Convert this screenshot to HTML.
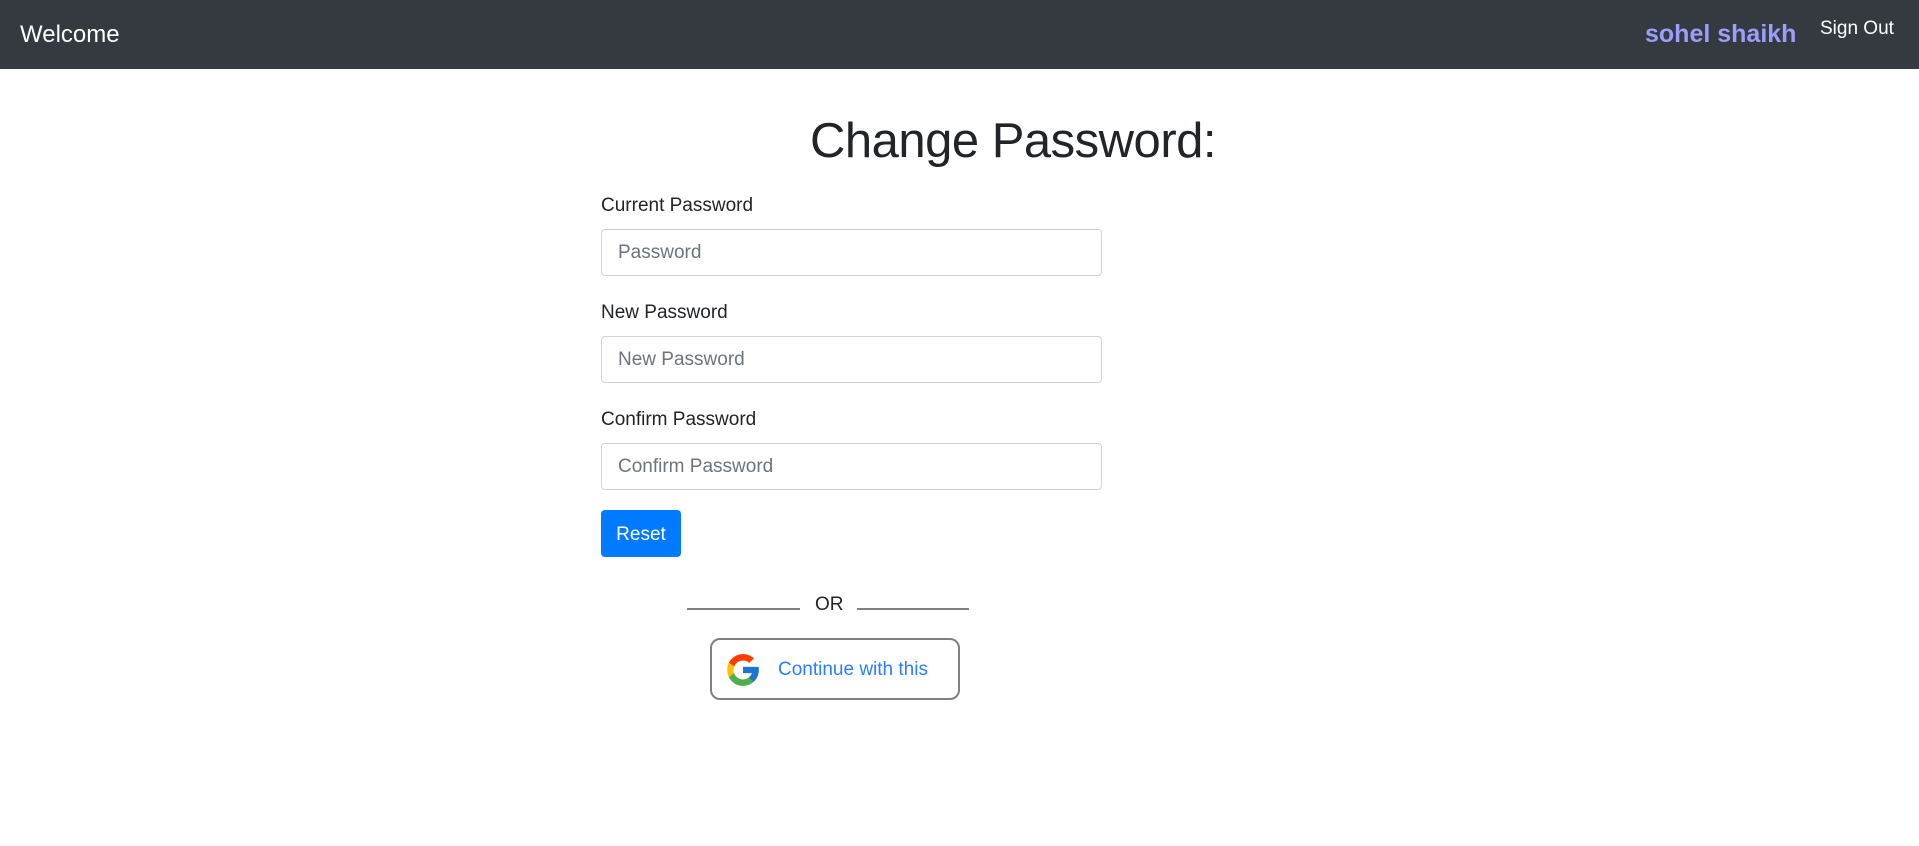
<!DOCTYPE html>
<html><head><style>
body{margin:0;width:1919px;height:846px;background:#fff;font-family:"Liberation Sans",sans-serif;color:#212529;position:relative;overflow:hidden}
.nav{position:absolute;left:0;top:0;width:1919px;height:69px;background:#343a40}
.abs{position:absolute;white-space:nowrap}
.lbl{font-size:19px;left:601px}
.inp{position:absolute;left:601px;width:501px;height:47px;border:1px solid #ced4da;border-radius:4px;box-sizing:border-box;font-size:19px;color:#6c757d;padding-left:16px;line-height:45px}
</style></head><body>
<div class="nav"></div>
<div class="abs" style="left:20px;top:21px;font-size:24px;color:#fff">Welcome</div>
<div class="abs" style="left:1645px;top:20px;font-size:25px;font-weight:bold;color:#9d9dfb">sohel shaikh</div>
<div class="abs" style="left:1820px;top:18px;font-size:19px;color:#fff">Sign Out</div>
<div class="abs" style="left:0;width:2026px;text-align:center;top:113px;font-size:49px;letter-spacing:-0.5px">Change Password:</div>
<div class="abs lbl" style="top:195px">Current Password</div>
<div class="inp" style="top:229px">Password</div>
<div class="abs lbl" style="top:302px">New Password</div>
<div class="inp" style="top:336px">New Password</div>
<div class="abs lbl" style="top:409px">Confirm Password</div>
<div class="inp" style="top:443px">Confirm Password</div>
<div class="abs" style="left:601px;top:510px;width:80px;height:47px;background:#007bff;border-radius:4px;color:#fff;font-size:19px;text-align:center;line-height:49px">Reset</div>
<div class="abs" style="left:687px;top:608px;width:113px;height:2px;background:#808080"></div>
<div class="abs" style="left:815px;top:594px;font-size:19px">OR</div>
<div class="abs" style="left:857px;top:608px;width:112px;height:2px;background:#808080"></div>
<div class="abs" style="left:710px;top:638px;width:250px;height:62px;border:2px solid #808080;border-radius:10px;box-sizing:border-box"></div>
<svg class="abs" style="left:724px;top:651px" width="38" height="38" viewBox="0 0 48 48">
<path fill="#FFC107" d="M43.6 20.1H42V20H24v8h11.3C33.7 32.7 29.2 36 24 36c-6.6 0-12-5.4-12-12s5.4-12 12-12c3.1 0 5.8 1.2 8 3l5.7-5.7C34 6.1 29.3 4 24 4 12.9 4 4 12.9 4 24s8.9 20 20 20 20-8.9 20-20c0-1.3-.1-2.6-.4-3.9z"/>
<path fill="#FF3D00" d="M6.3 14.7l6.6 4.8C14.7 15.1 19 12 24 12c3.1 0 5.8 1.2 8 3l5.7-5.7C34 6.1 29.3 4 24 4 16.3 4 9.7 8.3 6.3 14.7z"/>
<path fill="#4CAF50" d="M24 44c5.2 0 9.9-2 13.4-5.2l-6.2-5.2C29.2 35.1 26.7 36 24 36c-5.2 0-9.6-3.3-11.3-8l-6.5 5C9.5 39.6 16.2 44 24 44z"/>
<path fill="#1976D2" d="M43.6 20.1H42V20H24v8h11.3c-.8 2.2-2.2 4.2-4.1 5.6l6.2 5.2C37 39.2 44 34 44 24c0-1.3-.1-2.6-.4-3.9z"/>
</svg>
<div class="abs" style="left:778px;top:659px;font-size:19px;color:#2a7fff">Continue with this</div>
</body></html>
